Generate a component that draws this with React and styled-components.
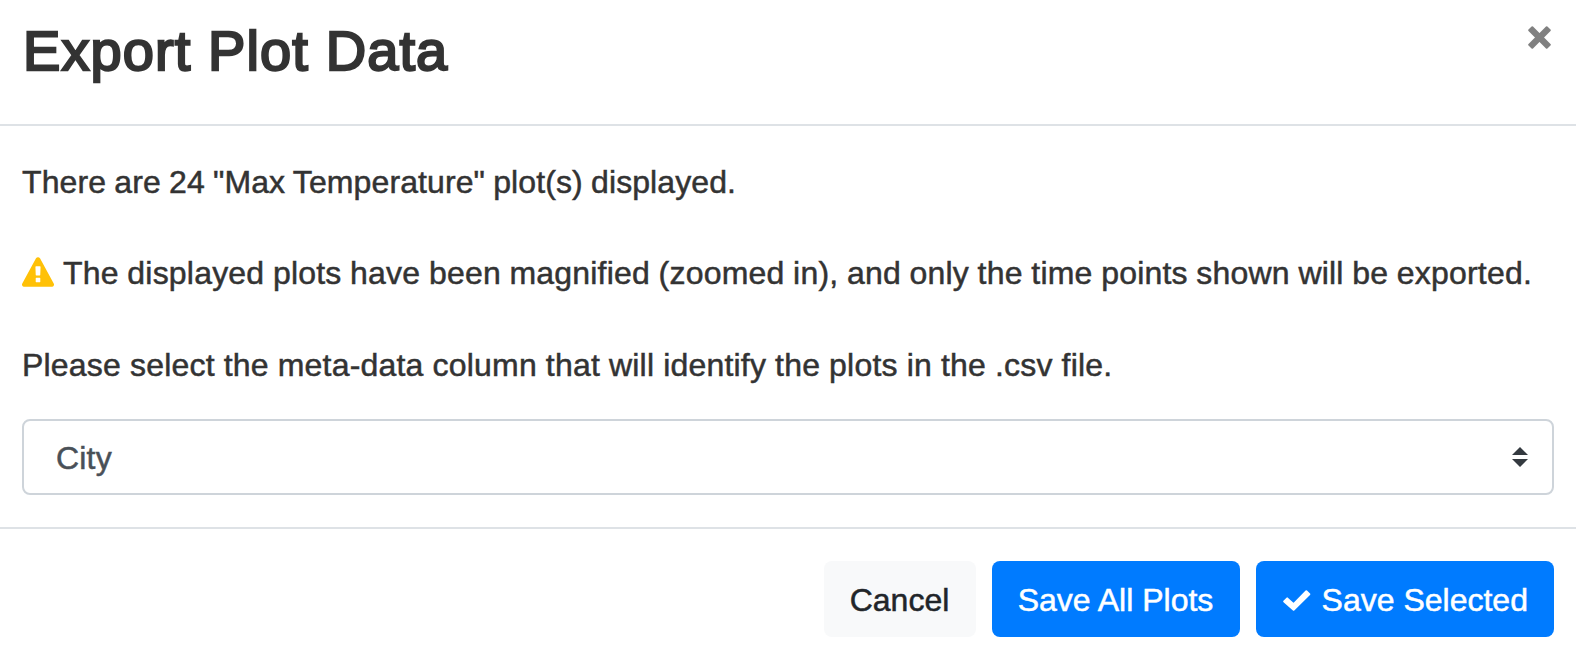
import React from "react";
import styled, { createGlobalStyle } from "styled-components";

const GlobalStyle = createGlobalStyle`
  *, *::before, *::after { box-sizing: border-box; }
  body {
    margin: 0;
    background: #fff;
    color: #333;
    font-family: "Liberation Sans", Arial, sans-serif;
    font-size: 32px;
    line-height: 46px;
  }
`;

const Dialog = styled.section`
  display: flex;
  flex-direction: column;
  width: 100%;
  height: 662px;
`;

const Header = styled.header`
  display: flex;
  justify-content: space-between;
  align-items: flex-start;
  height: 126px;
  padding: 20px 22px 0 23px;
  border-bottom: 2px solid #dee2e6;
`;

const Title = styled.h1`
  margin: 0;
  font-size: 56px;
  line-height: 62px;
  font-weight: 400;
  letter-spacing: 1.1px;
  white-space: nowrap;
  -webkit-text-stroke: 2.3px currentColor;
`;

const CloseButton = styled.button`
  display: flex;
  margin: 0;
  padding: 6px 3px;
  border: 0;
  background: none;
  color: #808080;
`;

const Body = styled.main`
  display: flex;
  flex-direction: column;
  height: 401px;
  padding: 33px 22px 0;
`;

const Message = styled.p`
  display: flex;
  align-items: center;
  height: 46px;
  margin: 0 0 ${(p) => p.$gap}px;
  white-space: nowrap;
  letter-spacing: ${(p) => p.$track || "normal"};
  word-spacing: ${(p) => p.$words || "normal"};
  -webkit-text-stroke: 0.5px currentColor;

  svg { margin: 0 9px 3px 0; }
`;

const Select = styled.div`
  display: flex;
  align-items: center;
  justify-content: space-between;
  height: 76px;
  padding: 0 24px 0 32px;
  border: 2px solid #ced4da;
  border-radius: 8px;
  color: #495057;
  letter-spacing: 0.2px;
  -webkit-text-stroke: 0.5px currentColor;
`;

const SelectValue = styled.span`
  padding-top: 2px;
`;

const Footer = styled.footer`
  display: flex;
  justify-content: flex-end;
  gap: 16px;
  padding: 32px 22px 0;
  border-top: 2px solid #dee2e6;
`;

const Button = styled.button`
  display: flex;
  align-items: center;
  justify-content: center;
  width: ${(p) => p.$width}px;
  height: 76px;
  padding: 2px 1px 0 0;
  border: 0;
  border-radius: 8px;
  background: ${(p) => (p.$primary ? "#007bff" : "#f8f9fa")};
  color: ${(p) => (p.$primary ? "#fff" : "#212529")};
  font: inherit;
  white-space: nowrap;
  -webkit-text-stroke: 0.5px currentColor;

  svg { margin: 0 11px 0 2px; }
`;

const CloseIcon = () => (
  <svg width="23" height="23" viewBox="0 0 23 23" fill="currentColor" stroke="currentColor" strokeWidth="2" strokeLinejoin="round">
    <path d="M4.300 1.200L11.500 8.400 18.700 1.200 21.800 4.300 14.600 11.500 21.800 18.700 18.700 21.800 11.500 14.600 4.300 21.800 1.200 18.700 8.400 11.500 1.200 4.300z" />
  </svg>
);

const WarningIcon = () => (
  <svg width="32" height="30" viewBox="0 0 1792 1664" fill="#ffc107">
    <path d="M1024 1375v-190q0-14-9.500-23.500t-22.500-9.500h-192q-13 0-22.500 9.500t-9.500 23.500v190q0 14 9.500 23.500t22.500 9.500h192q13 0 22.500-9.500t9.500-23.500zm-2-374l18-459q0-12-10-19-13-11-24-11h-220q-11 0-24 11-10 7-10 21l17 457q0 10 10 16.500t24 6.500h185q14 0 23.500-6.500t10.500-16.500zm-14-934l768 1408q35 63-2 126-17 29-46.500 46t-63.500 17h-1536q-34 0-63.500-17t-46.500-46q-37-63-2-126l768-1408q17-31 47-49t65-18 65 18 47 49z" />
  </svg>
);

const CheckIcon = () => (
  <svg width="27.500" height="21" viewBox="0 0 27.500 21" fill="currentColor" stroke="currentColor" strokeWidth="2" strokeLinejoin="round">
    <path d="M4.200 8.400L10.600 14.200 23.300 1.200 26.300 4.200 10.600 19.800 1.200 11.400z" />
  </svg>
);

const SortIcon = () => (
  <svg width="16" height="20" viewBox="0 0 16 20" fill="#343a40">
    <path d="M8 0l8 8H0zM0 12h16l-8 8z" />
  </svg>
);

export default function App() {
  return (
    <>
      <GlobalStyle />
      <Dialog>
        <Header>
          <Title>Export Plot Data</Title>
          <CloseButton aria-label="Close"><CloseIcon /></CloseButton>
        </Header>
        <Body>
          <Message $gap={45} $track="0.1px" $words="-0.8px">There are 24 "Max Temperature" plot(s) displayed.</Message>
          <Message $gap={46} $track="0.2px" $words="-0.5px">
            <WarningIcon />
            The displayed plots have been magnified (zoomed in), and only the time points shown will be exported.
          </Message>
          <Message $gap={31} $track="0.2px" $words="-0.15px">Please select the meta-data column that will identify the plots in the .csv file.</Message>
          <Select><SelectValue>City</SelectValue><SortIcon /></Select>
        </Body>
        <Footer>
          <Button $width={152}>Cancel</Button>
          <Button $width={248} $primary>Save All Plots</Button>
          <Button $width={298} $primary><CheckIcon />Save Selected</Button>
        </Footer>
      </Dialog>
    </>
  );
}
